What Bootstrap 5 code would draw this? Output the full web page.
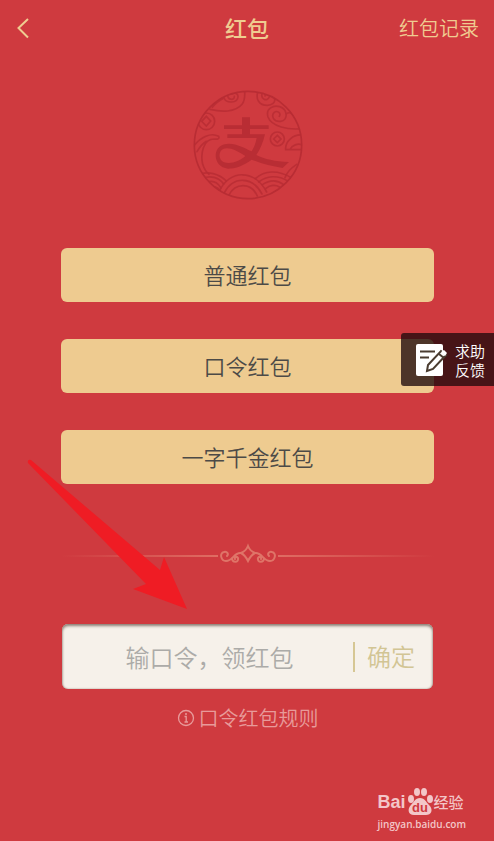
<!DOCTYPE html>
<html lang="zh-CN">
<head>
<meta charset="utf-8">
<meta name="viewport" content="width=device-width, initial-scale=1">
<title>红包</title>
<link href="https://cdn.jsdelivr.net/npm/bootstrap@5.3.0/dist/css/bootstrap.min.css" rel="stylesheet">
<style>
  body { background: #cf3a3f; font-family: "Noto Sans CJK SC", sans-serif; font-weight: 350; }
  .screen { min-height: 100vh; overflow: hidden; }
  .topbar { display: grid; grid-template-columns: 1fr auto 1fr; height: 56px; padding: 0 15px; color: #efcc91; }
  .topbar h1 { font-size: 22px; line-height: 32px; font-weight: 500; padding-bottom: 3px; }
  .topbar a { color: #efcc91; font-size: 20px; line-height: 32px; }
  .back { color: #efcc91; line-height: 0; }
  .content { padding: 34px 60px 0 61px; }
  .packets { gap: 37px; margin-top: 48px; }
  .packet { --bs-btn-bg: #eecb90; --bs-btn-hover-bg: #e6c182; --bs-btn-color: #4c4a47; --bs-btn-border-width: 0; --bs-btn-border-radius: 6px; --bs-btn-font-weight: 350; height: 54px; font-size: 22px; line-height: 32px; padding: 0 0 2px; }
  .ornament { margin-top: 59px; gap: 2px; }
  .rule { height: 2px; background: linear-gradient(90deg, transparent, #df6d63); margin-top: 3px; }
  .rule-end { background: linear-gradient(270deg, transparent, #df6d63); }
  .code-box { margin: 59px 1px 0; height: 65px; border-radius: 6px; background: #f6f1ea; box-shadow: inset 0 2px 3px #8d8177, inset 0 0 2px #a89c90; }
  .code-box input { font-size: 24px; line-height: 36px; font-weight: 350; color: #555; min-width: 0; padding: 0 0 0 4px; }
  .code-box input::placeholder { color: #acaba8; opacity: 1; }
  .confirm { font-size: 24px; line-height: 28px; font-weight: 350; color: #d2c594; border: 0; border-left: 2px solid #d6c794; background: none; padding: 0 18px 2px 12px; }
  .rules-link { color: #e89a9a; font-size: 20px; line-height: 30px; margin-top: 14px; gap: 4px; }
  .feedback { top: 333px; right: 0; height: 53px; padding: 0 9px 0 14px; gap: 7px; background: rgba(32, 10, 12, .78); border: 0; border-radius: 3px 0 0 3px; color: #fff; font-size: 15px; line-height: 19px; font-weight: 350; }
  .pointer { left: 0; top: 430px; pointer-events: none; }
  .credit { right: 28px; bottom: 10px; color: #f3c6c8; font-family: "Open Sans", sans-serif; font-size: 10px; font-weight: 600; line-height: 14px; }
  .brand { font-size: 18px; line-height: 24px; font-weight: 700; font-family: "Liberation Sans", sans-serif; }
  .brand-cn { font-size: 15px; font-weight: 500; font-family: "Noto Sans CJK SC", sans-serif; }
</style>
<script src="https://cdn.jsdelivr.net/npm/bootstrap@5.3.0/dist/js/bootstrap.bundle.min.js" defer></script>
</head>
<body>
<div class="screen position-relative">
  <header class="topbar align-items-center">
    <button class="back btn p-0 border-0 text-start" type="button" aria-label="返回">
      <svg width="18" height="24" viewBox="0 0 18 24" fill="none" stroke="currentColor" stroke-width="2"><path d="M13 3 3.500 12 13 21.500"/></svg>
    </button>
    <h1 class="m-0">红包</h1>
    <a href="#" class="text-end text-decoration-none">红包记录</a>
  </header>

  <main class="content">
    <div class="text-center lh-1">
      <svg width="110" height="110" viewBox="24 16 330 330" fill="none" stroke="#b92d34" stroke-width="5" stroke-linecap="round" aria-hidden="true">
        <defs><clipPath id="disc"><circle cx="189" cy="181" r="161"/></clipPath></defs>
        <circle cx="189" cy="181" r="161"/>
        <g clip-path="url(#disc)" stroke-opacity=".85">
          <path d="M75 74C108 82 151 84 171 59C180 47 180 34 179 20"/>
          <path d="M82 68C91 55 104 47 117 40C124 57 157 56 159 37C160 27 149 22 140 28M128 34C131 47 149 47 148 35"/>
          <path d="M219 20C211 43 222 62 247 62C262 62 271 53 269 44M232 25C225 43 246 53 253 37C256 28 242 25 240 34"/>
          <path d="M351 132C309 136 260 126 249 97C241 70 266 61 284 66C309 74 310 107 287 110C266 113 258 94 267 84C276 76 289 84 283 95M303 88C312 81 325 85 329 91"/>
          <circle cx="64" cy="110" r="25"/><path d="M64 95 77 109 64 124 50 110Z"/>
          <circle cx="277" cy="163" r="21"/><path d="M277 152 288 163 277 174 266 163Z"/>
          <path d="M26 184C47 157 78 142 101 155C105 164 95 164 88 163C54 163 46 207 53 239C59 257 65 264 72 269M36 201C45 186 52 177 64 170"/>
          <path d="M350 151C326 149 300 169 302 195L353 195M315 194C322 181 338 176 350 180M335 239C318 250 306 260 300 279"/>
          <path d="M38 270C69 258 102 267 124 289M53 281C76 271 101 278 116 298M64 293C83 286 98 293 108 310M82 307C93 306 99 309 104 317"/>
          <path d="M103 320C133 254 209 253 245 322M117 326C143 274 202 273 231 328M131 332C151 294 198 292 217 334"/>
          <path d="M211 282C239 257 278 255 319 279M221 292C245 273 278 270 308 289M232 300C252 287 276 285 296 300M243 311C255 301 272 299 283 307"/>
        </g>
        <g fill="#b92d34" stroke="none">
          <path d="M171 98H195V122H251V133H195V149H240C234 174 226 194 214 211C239 224 270 230 312 232L293 250C260 245 229 237 200 225C178 242 151 252 129 252C105 250 92 232 92 212C93 190 108 177 132 177C158 178 178 190 200 200C208 186 213 173 215 160H127V149H171V133H117V122H171Z"/>
          <path fill="#cf3a3f" d="M181 214C157 198 133 186 116 192C101 198 100 219 111 229C128 242 162 232 181 214Z"/>
        </g>
      </svg>
    </div>

    <div class="packets d-grid">
      <button class="packet btn" type="button">普通红包</button>
      <button class="packet btn" type="button">口令红包</button>
      <button class="packet btn" type="button">一字千金红包</button>
    </div>

    <div class="ornament d-flex align-items-center" aria-hidden="true">
      <div class="rule flex-fill"></div>
      <svg width="56" height="22" viewBox="0 0 56 22" fill="none" stroke="#df7468" stroke-width="2" stroke-linecap="round">
        <path d="M28 3Q26 8 21 10Q25 12 28 18Q31 12 35 10Q30 8 28 3Z"/>
        <path d="M21 10C14 9 13 18 6 18C1 18-1 10 4 9C7 8 9 11 7 13M12 15C12 20 19 20 18 15C17 13 14 14 15 16"/>
        <path d="M35 10C42 9 43 18 50 18C55 18 57 10 52 9C49 8 47 11 49 13M44 15C44 20 37 20 38 15C39 13 42 14 41 16"/>
      </svg>
      <div class="rule rule-end flex-fill"></div>
    </div>

    <form class="code-box d-flex align-items-center">
      <input class="form-control bg-transparent border-0 shadow-none text-center flex-fill" type="text" aria-label="口令" placeholder="输口令，领红包">
      <button class="confirm flex-shrink-0" type="button">确定</button>
    </form>

    <a href="#" class="rules-link d-flex justify-content-center align-items-center text-decoration-none">
      <svg width="18" height="18" viewBox="0 0 18 18" fill="none" stroke="currentColor" aria-hidden="true"><circle cx="9" cy="9" r="7.500" stroke-width="1.300"/><path d="M7.500 7.500H9.200V13M7.500 13H11" stroke-width="1.300"/><circle cx="9" cy="5" r="1" fill="currentColor" stroke="none"/></svg>
      口令红包规则
    </a>
  </main>

  <svg class="pointer position-absolute" width="200" height="190" viewBox="0 430 200 190" aria-hidden="true"><path fill="#ef1c24" d="M28 463Q27 459 31 460L160 570 164 557 187 609 133 589 146 584Z"/></svg>

  <button class="feedback position-absolute d-flex align-items-center" type="button">
    <svg width="33" height="34" viewBox="0 0 33 34" aria-hidden="true">
      <path fill="#fff" d="M3 1H26Q28 1 28 3V31Q28 33 26 33H3Q1 33 1 31V3Q1 1 3 1Z"/>
      <path d="M5 8.500H20M5 14.500H14" stroke="#4a3c30" stroke-width="2"/>
      <path d="M12 28 13 22 26 8 31 12 18 26Z" fill="#fff" stroke="#4a3c30" stroke-width="2"/>
      <path d="m24 11 5 4" stroke="#4a3c30" stroke-width="2"/>
      <path d="m27 8 2-1 3 3-2 3-4-3Z" fill="#fff"/>
    </svg>
    <span>求助<br>反馈</span>
  </button>

  <div class="credit position-absolute">
    <div class="brand d-flex align-items-center">
      <span>Bai</span>
      <svg width="28" height="30" viewBox="0 0 28 30" fill="currentColor" role="img" aria-label="du">
        <ellipse cx="5" cy="12" rx="3" ry="4"/><ellipse cx="11" cy="5" rx="3" ry="4"/><ellipse cx="18" cy="5" rx="3" ry="4"/><ellipse cx="24" cy="12" rx="3" ry="4"/>
        <path d="M14 11C19 11 20 15 23 18C28 23 25 28 20 28C16 28 12 28 8 28C2 28 1 22 5 18C8 15 9 11 14 11Z"/>
        <text x="14" y="25" text-anchor="middle" font-size="13" font-weight="700" fill="#cf3a3f">du</text>
      </svg>
      <span class="brand-cn">经验</span>
    </div>
    <div>jingyan.baidu.com</div>
  </div>
</div>
</body>
</html>
